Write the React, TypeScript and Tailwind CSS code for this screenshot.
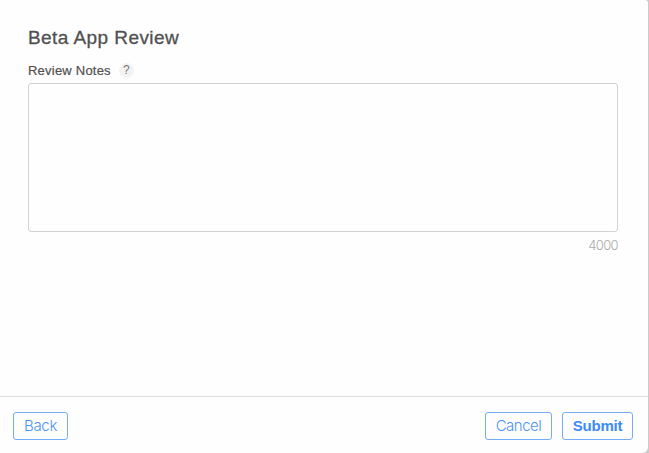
export default function App() {
  return (
    <div className="h-[453px] w-[649px] overflow-hidden bg-[#cbcbcb] pr-px font-['Liberation_Sans',Arial,sans-serif]">
      <form className="flex h-full flex-col rounded-tr-[3px] rounded-br-[6px] bg-[#fefefe]" onSubmit={(e) => e.preventDefault()}>
        <main className="flex flex-1 flex-col pr-[30px] pl-7 pt-[26px]">
          <h1 className="h-6 text-[19px] leading-6 whitespace-nowrap tracking-[0.43px] text-[#505050] [-webkit-text-stroke:0.3px_#505050]">
            Beta App Review
          </h1>
          <div className="mt-[12px] flex h-4 items-center gap-2">
            <label htmlFor="notes" className="relative top-px text-[13px] leading-4 whitespace-nowrap tracking-[0.22px] text-[#505050] [-webkit-text-stroke:0.2px_#505050]">
              Review Notes
            </label>
            <button type="button" className="flex size-[15px] items-center justify-center rounded-full bg-[#f3f3f3] text-xs leading-none text-[#777]">
              ?
            </button>
          </div>
          <textarea id="notes" className="mt-[5px] block h-[149px] w-full resize-none rounded-[3px] border border-[#d2d2d2] bg-[#fefefe] outline-none" />
          <span className="mt-[5px] self-end font-['Inter',sans-serif] text-[13px] leading-4 font-light tracking-[-0.6px] text-[#aaa]">4000</span>
        </main>
        <footer className="flex h-[57px] items-center border-t border-[#dedede] pr-[15px] pl-[13px] pt-px font-['Inter',sans-serif] text-[15px] font-light text-[#4c94f5]">
          <button type="button" className="h-7 w-[55px] rounded-[3px] border border-[#75acf5] pt-px tracking-[-0.3px]">Back</button>
          <button type="button" className="ml-auto h-7 w-[67px] rounded-[3px] border border-[#75acf5] pt-px tracking-[-0.5px]">Cancel</button>
          <button type="submit" className="ml-2.5 h-7 w-[71px] rounded-[3px] border border-[#75acf5] pt-px font-['Liberation_Sans',Arial,sans-serif] font-bold tracking-[-0.2px] text-[#3d8cf6]">Submit</button>
        </footer>
      </form>
    </div>
  );
}
